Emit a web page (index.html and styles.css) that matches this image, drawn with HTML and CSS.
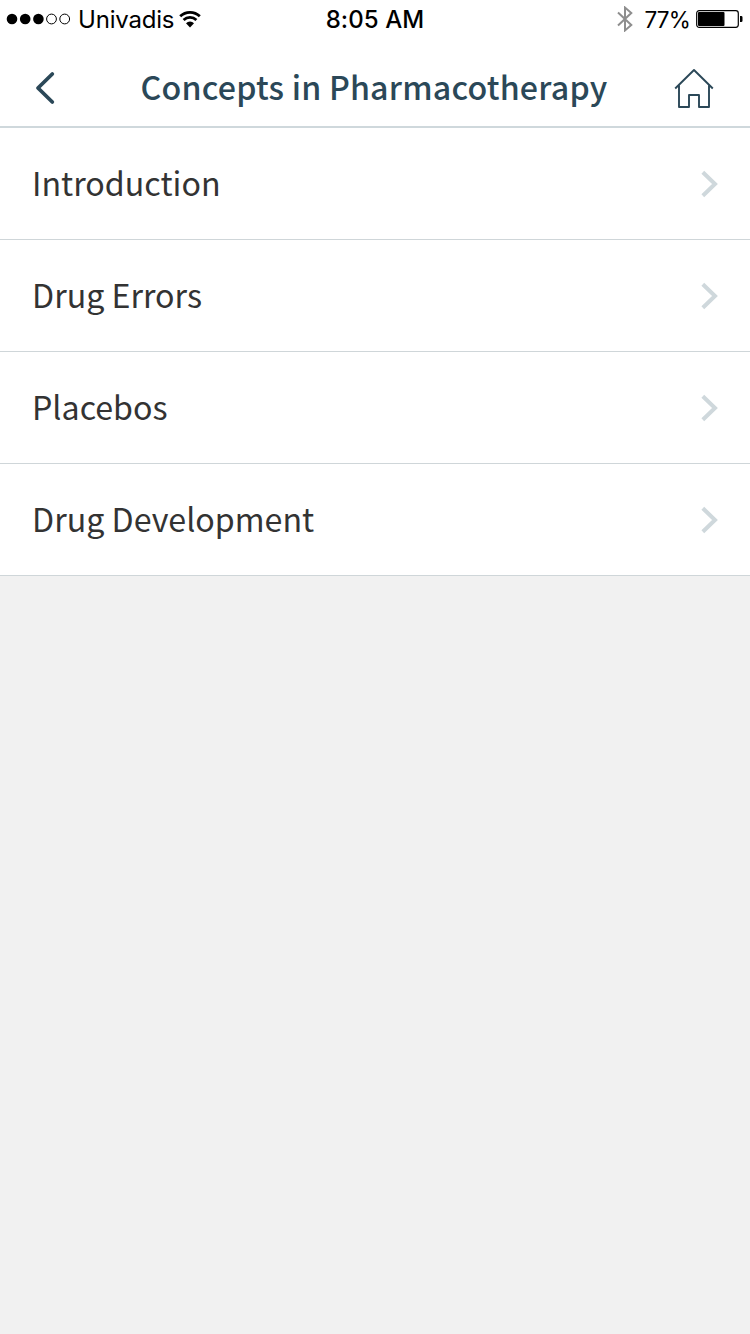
FILE: index.html
```html
<!DOCTYPE html>
<html lang="en">
<head>
    <meta charset="UTF-8">
    <meta name="viewport" content="width=device-width, initial-scale=1.0">
    <title>Concepts in Pharmacotherapy</title>
    <link rel="stylesheet" href="styles.css">
</head>
<body>
    <!-- Status bar -->
    <div class="status-bar">
        <div class="status-left">
            <svg class="signal" width="66" height="12" viewBox="0 0 66 12">
                <circle cx="6" cy="6" r="5.3"/>
                <circle cx="19.2" cy="6" r="5.3"/>
                <circle cx="32.4" cy="6" r="5.3"/>
                <circle class="empty" cx="45.5" cy="6" r="4.9"/>
                <circle class="empty" cx="58.7" cy="6" r="4.9"/>
            </svg>
            <span class="carrier">Univadis</span>
            <svg class="wifi" width="22" height="18" viewBox="0 0 22 18">
                <path d="M1.2 6.2a14.2 14.2 0 0 1 19.6 0M4.6 10a9.2 9.2 0 0 1 12.8 0"/>
                <path class="wifi-dot" d="M7 13.2a5.8 5.8 0 0 1 8 0L11 17.4z"/>
            </svg>
        </div>
        <div class="time">8:05 AM</div>
        <div class="status-right">
            <svg class="bluetooth" width="16" height="26" viewBox="0 0 16 26">
                <path d="M1 6.5L14.3 19 8 24.4V1.6L14.3 7 1 19.5"/>
            </svg>
            <span class="percent">77%</span>
            <svg class="battery" width="47" height="18" viewBox="0 0 47 18">
                <rect class="battery-case" x="0.7" y="0.7" width="41.6" height="16.6" rx="2.5"/>
                <rect x="2" y="2" width="26.5" height="14" rx="1"/>
                <path d="M44 6h1.2a1.3 1.3 0 0 1 1.3 1.3v3.4a1.3 1.3 0 0 1-1.3 1.3H44z"/>
            </svg>
        </div>
    </div>

    <!-- Title bar -->
    <header class="nav-bar">
        <svg class="back" width="20" height="34" viewBox="0 0 20 34">
            <path d="M17.3 3L3 17l14.3 14"/>
        </svg>
        <h1>Concepts in Pharmacotherapy</h1>
        <svg class="home" width="40" height="42" viewBox="0 0 40 42">
            <path d="M1.2 21.5L20 3l18.8 18.5M5 18.5V40h10V28h10v12h10V18.5"/>
        </svg>
    </header>

    <!-- Chapters -->
    <ul class="chapters">
        <li class="chapter">
            <span>Introduction</span>
            <svg class="arrow" width="18" height="28" viewBox="0 0 18 28"><path d="M2.8 2.2L15 14 2.8 25.8"/></svg>
        </li>
        <li class="chapter">
            <span>Drug Errors</span>
            <svg class="arrow" width="18" height="28" viewBox="0 0 18 28"><path d="M2.8 2.2L15 14 2.8 25.8"/></svg>
        </li>
        <li class="chapter">
            <span>Placebos</span>
            <svg class="arrow" width="18" height="28" viewBox="0 0 18 28"><path d="M2.8 2.2L15 14 2.8 25.8"/></svg>
        </li>
        <li class="chapter">
            <span>Drug Development</span>
            <svg class="arrow" width="18" height="28" viewBox="0 0 18 28"><path d="M2.8 2.2L15 14 2.8 25.8"/></svg>
        </li>
    </ul>
</body>
</html>
```
FILE: styles.css
```css
* {
    box-sizing: border-box;
}

body {
    margin: 0;
    min-height: 1334px;
    background: #f1f1f1;
    color: #333;
    font-family: 'Noto Sans CJK SC', 'Noto Sans', sans-serif;
}

svg {
    display: block;
    flex: none;
    fill: none;
}

/* Status bar */
.status-bar {
    display: grid;
    grid-template-columns: 1fr auto 1fr;
    align-items: center;
    height: 40px;
    padding: 0 7px 2px 6px;
    background: #fff;
    color: #000;
    font-family: Inter, sans-serif;
    font-size: 24px;
    line-height: 36px;
}

.status-left,
.status-right {
    display: flex;
    align-items: center;
}

.status-right {
    justify-content: flex-end;
}

.signal,
.battery,
.wifi-dot {
    fill: #000;
}

.empty {
    fill: none;
    stroke: #000;
    stroke-width: 1;
}

.carrier {
    margin: 0 5px 0 6px;
    padding-top: 2px;
    letter-spacing: -0.2px;
}

.wifi {
    stroke: #000;
    stroke-width: 2.8;
}

.wifi-dot {
    stroke: none;
}

.time {
    padding: 2px 0 0 1px;
    font-weight: 500;
    letter-spacing: 0.1px;
}

.bluetooth {
    stroke: #8e8e8e;
    stroke-width: 2;
}

.percent {
    margin: 0 6px 0 11px;
    padding-top: 2px;
    font-size: 22.5px;
    letter-spacing: -0.8px;
}

.battery-case {
    fill: none;
    stroke: #000;
    stroke-width: 1.2;
}

/* Title bar */
.nav-bar {
    display: grid;
    grid-template-columns: 1fr auto 1fr;
    align-items: center;
    height: 88px;
    padding: 10px 36px 0 35px;
    background: #fff;
    border-bottom: 2px solid #cfd8dc;
}

.nav-bar h1 {
    margin: 0;
    padding: 0 1px 4px 0;
    color: #2b4858;
    font-size: 32.2px;
    font-weight: 500;
    letter-spacing: 0.2px;
    line-height: 48px;
}

.back {
    stroke: #2b4858;
    stroke-width: 3.8;
    stroke-linecap: round;
    stroke-linejoin: round;
}

.home {
    justify-self: end;
    stroke: #2b4858;
    stroke-width: 1.9;
    stroke-linejoin: round;
}

/* Chapter list */
.chapters {
    margin: 0;
    padding: 0;
    list-style: none;
    background: #fff;
}

.chapter {
    display: flex;
    align-items: center;
    justify-content: space-between;
    height: 112px;
    padding: 0 32px;
    border-bottom: 1px solid #cfd6d9;
    font-size: 32.2px;
    line-height: 48px;
}

.chapter span {
    padding-bottom: 4px;
}

.arrow {
    stroke: #cfd8dc;
    stroke-width: 4;
}
```
